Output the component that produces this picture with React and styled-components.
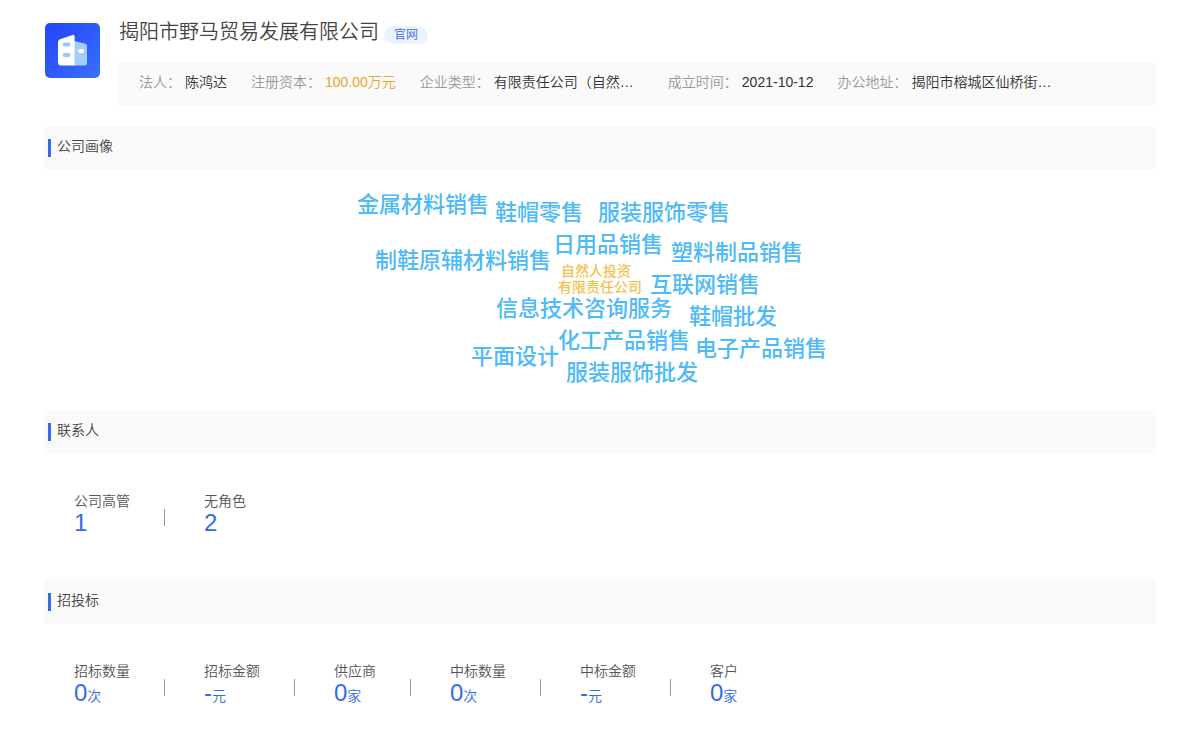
import React from "react";
import styled, { createGlobalStyle } from "styled-components";

const GlobalStyle = createGlobalStyle`
  * { box-sizing: border-box; }
  body {
    margin: 0;
    background: #fff;
    color: #444;
    font-family: "Liberation Sans", "Noto Sans CJK SC", sans-serif;
    font-size: 14px;
    font-weight: 350;
    line-height: 20px;
  }
  h1, h2, dl, dd, ul { margin: 0; padding: 0; font-weight: inherit; }
`;

const Page = styled.main`
  padding: 20px 44px;
`;

const Header = styled.header`
  display: flex;
  gap: 18px;
  margin-bottom: 20px;
`;

const Logo = styled.svg`
  flex: none;
  width: 57px;
  height: 57px;
  margin-top: 2px;
`;

const HeaderBody = styled.div`
  flex: 1;
  min-width: 0;
`;

const TitleRow = styled.div`
  display: flex;
  align-items: flex-start;
  gap: 5px;
  height: 42px;
`;

const Title = styled.h1`
  font-size: 20px;
  line-height: 24px;
`;

const SiteLink = styled.a`
  margin-top: 6px;
  padding: 0 10px;
  border-radius: 9px;
  background: #edf3fe;
  color: #3a6ae6;
  font-size: 12px;
  line-height: 18px;
  text-decoration: none;
`;

const InfoBar = styled.dl`
  display: flex;
  gap: 24px;
  padding: 10px 20px 14px;
  background: #fafafa;
  white-space: nowrap;
`;

const InfoItem = styled.div`
  display: flex;
  gap: 4px;
`;

const InfoLabel = styled.dt`
  color: #999;
`;

const InfoValue = styled.dd`
  width: ${(p) => (p.$clipped ? "150px" : "auto")};
  overflow: hidden;
  text-overflow: ellipsis;
  color: ${(p) => (p.$accent ? "#eba42f" : "#333")};
`;

const SectionTitle = styled.h2`
  display: flex;
  gap: 6px;
  height: 44px;
  padding: 10px 4px;
  background: #fafafa;
  font-size: 14px;
  line-height: 20px;

  &::before {
    content: "";
    width: 3px;
    height: 18px;
    margin-top: 3px;
    background: #366aea;
  }
`;

const Cloud = styled.ul`
  position: relative;
  width: 500px;
  height: 240px;
  margin: 0 auto;
  list-style: none;
`;

const Word = styled.li`
  position: absolute;
  left: ${(p) => p.$x}px;
  top: ${(p) => p.$y}px;
  color: #4ebaf7;
  font-size: 22px;
  line-height: 24px;
  font-weight: 500;
  white-space: nowrap;
`;

const CoreWord = styled(Word)`
  color: #f5c04e;
  font-size: 14px;
  line-height: 16px;
`;

const Stats = styled.dl`
  display: flex;
  padding: 37px 30px;
  min-height: 126px;
`;

const Stat = styled.div`
  display: flex;
  flex-direction: column;

  & + & {
    margin-left: 34px;
    padding-left: 40px;
    background: linear-gradient(#999, #999) 0 18px / 1px 17px no-repeat;
  }
`;

const StatLabel = styled.dt`
  color: #555;
`;

const StatValue = styled.dd`
  color: #366aea;
  font-size: 24px;
  line-height: 24px;
`;

const Unit = styled.span`
  font-size: 14px;
`;

const info = [
  { label: "法人", value: "陈鸿达" },
  { label: "注册资本", value: "100.00万元", accent: true },
  { label: "企业类型", value: "有限责任公司（自然…", clipped: true },
  { label: "成立时间", value: "2021-10-12" },
  { label: "办公地址", value: "揭阳市榕城区仙桥街…", clipped: true },
];

const words = [
  ["金属材料销售", 7, 23],
  ["鞋帽零售", 145, 31],
  ["服装服饰零售", 248, 31],
  ["日用品销售", 203, 63],
  ["塑料制品销售", 321, 71],
  ["制鞋原辅材料销售", 25, 79],
  ["互联网销售", 300, 103],
  ["信息技术咨询服务", 146, 127],
  ["鞋帽批发", 339, 135],
  ["化工产品销售", 208, 159],
  ["电子产品销售", 345, 167],
  ["平面设计", 121, 175],
  ["服装服饰批发", 216, 191],
];

const coreWords = [
  ["自然人投资", 211, 93],
  ["有限责任公司", 208, 109],
];

const contacts = [
  { label: "公司高管", value: "1" },
  { label: "无角色", value: "2" },
];

const bids = [
  { label: "招标数量", value: "0", unit: "次" },
  { label: "招标金额", value: "-", unit: "元" },
  { label: "供应商", value: "0", unit: "家" },
  { label: "中标数量", value: "0", unit: "次" },
  { label: "中标金额", value: "-", unit: "元" },
  { label: "客户", value: "0", unit: "家" },
];

function CompanyLogo() {
  return (
    <Logo viewBox="0 0 57 57" aria-hidden="true">
      <defs>
        <linearGradient id="logo-bg" x1="0" y1="0" x2="1" y2="1">
          <stop offset="0" stopColor="#2443fb" />
          <stop offset="1" stopColor="#3a70fb" />
        </linearGradient>
      </defs>
      <rect x="1" y="1" width="55" height="55" rx="5" fill="url(#logo-bg)" />
      <path d="M30 19 L41.5 21.8 Q43 22.2 43 24 V41 Q43 43.5 40.5 43.5 H30 Z" fill="#a3cdfd" />
      <path d="M16 17.2 L28.6 13 Q30.6 12.4 30.6 14.4 V43.5 H17 Q14 43.5 14 40.5 V20 Q14 17.8 16 17.2 Z" fill="#fff" />
      <rect x="18.5" y="20.5" width="8" height="4" rx="2" fill="#a3c4f8" />
      <rect x="18.5" y="31" width="8" height="4" rx="2" fill="#a3c4f8" />
      <rect x="34" y="27" width="6" height="4" rx="2" fill="#fff" />
    </Logo>
  );
}

function StatList({ items }) {
  return (
    <Stats>
      {items.map((s) => (
        <Stat key={s.label}>
          <StatLabel>{s.label}</StatLabel>
          <StatValue>
            {s.value}
            {s.unit && <Unit>{s.unit}</Unit>}
          </StatValue>
        </Stat>
      ))}
    </Stats>
  );
}

export default function App() {
  return (
    <>
      <GlobalStyle />
      <Page>
        <Header>
          <CompanyLogo />
          <HeaderBody>
            <TitleRow>
              <Title>揭阳市野马贸易发展有限公司</Title>
              <SiteLink href="#">官网</SiteLink>
            </TitleRow>
            <InfoBar>
              {info.map((i) => (
                <InfoItem key={i.label}>
                  <InfoLabel>{i.label}：</InfoLabel>
                  <InfoValue $accent={i.accent} $clipped={i.clipped}>
                    {i.value}
                  </InfoValue>
                </InfoItem>
              ))}
            </InfoBar>
          </HeaderBody>
        </Header>

        <section>
          <SectionTitle>公司画像</SectionTitle>
          <Cloud>
            {words.map(([text, x, y]) => (
              <Word key={text} $x={x} $y={y}>
                {text}
              </Word>
            ))}
            {coreWords.map(([text, x, y]) => (
              <CoreWord key={text} $x={x} $y={y}>
                {text}
              </CoreWord>
            ))}
          </Cloud>
        </section>

        <section>
          <SectionTitle>联系人</SectionTitle>
          <StatList items={contacts} />
        </section>

        <section>
          <SectionTitle>招投标</SectionTitle>
          <StatList items={bids} />
        </section>
      </Page>
    </>
  );
}
